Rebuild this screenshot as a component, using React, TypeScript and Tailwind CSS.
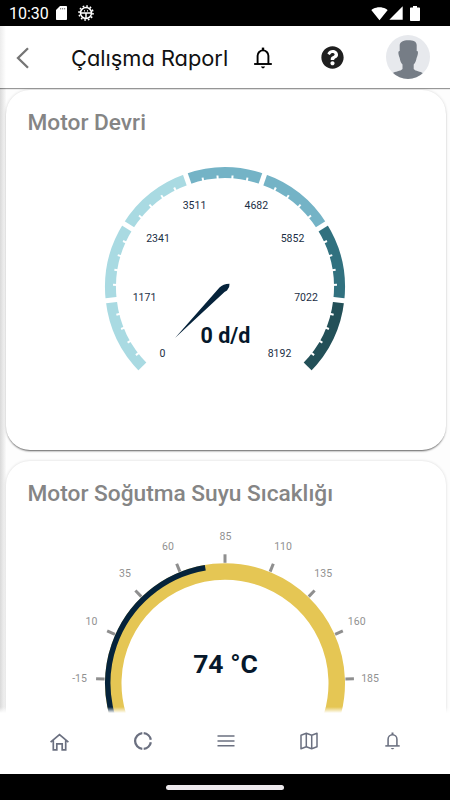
import type { ReactNode } from "react"
import { FaQuestionCircle } from "react-icons/fa"
import { MdSdCard, MdSignalCellular4Bar, MdSignalWifi4Bar } from "react-icons/md"

const polar = (cx: number, cy: number, r: number, deg: number) => {
    const a = (deg * Math.PI) / 180
    return [cx + r * Math.sin(a), cy - r * Math.cos(a)]
}

const arc = (cx: number, cy: number, r: number, from: number, to: number) => {
    const [x1, y1] = polar(cx, cy, r, from)
    const [x2, y2] = polar(cx, cy, r, to)
    return `M${x1} ${y1}A${r} ${r} 0 ${to - from > 180 ? 1 : 0} 1 ${x2} ${y2}`
}

const Bell = ({ className }: { className: string }) => (
    <svg viewBox="0 0 18 22" className={className} fill="none" stroke="currentColor" strokeWidth="1.900">
        <path d="M3.600 17V8.800a5.400 5.400 0 0 1 10.800 0V17" />
        <path d="M.2 17h17.600" />
        <path d="M9 .6v3" strokeWidth="2.400" />
        <path d="M6.800 19.600h4.400L9.800 21.200H8.200z" fill="currentColor" stroke="none" />
    </svg>
)

const StatusBar = () => (
    <div className="flex h-[26px] shrink-0 items-center bg-black pl-[9px] pr-[30px] text-white">
        <span className="w-[44px] pt-[1px] text-[16px] leading-none">10:30</span>
        <svg viewBox="0 0 11 14" className="ml-[3px] h-[14px] w-[11px]">
            <path fill="currentColor" d="M4 0h6.300q.7 0 .7.700v12.600q0 .7-.7.700H.7q-.7 0-.7-.7V4z" />
            <path stroke="#555" strokeWidth="1" strokeDasharray="1.200 .8" d="M4 2.800h5.500" />
        </svg>
        <svg viewBox="0 0 16 16" className="ml-[11px] h-4 w-4" fill="none" stroke="currentColor">
            <circle cx="8" cy="8" r="5.5" strokeWidth="1.5" />
            <circle cx="8" cy="8" r="7" strokeWidth="1.6" strokeDasharray="1.7 1.965" />
            <path d="M3 8h10M8 8v5.5" strokeWidth="1.5" />
            <path d="M6 5.8h1M9 5.8h1" strokeWidth="1.2" />
        </svg>
        <div className="ml-auto flex items-center">
            <MdSignalWifi4Bar className="h-[17px] w-[17px]" />
            <MdSignalCellular4Bar className="h-4 w-4" />
            <svg viewBox="0 0 10 15" className="ml-[6px] h-[15px] w-[10px]" fill="currentColor">
                <path d="M3 0h4v1.500h2.200a.8.8 0 0 1 .8.8v11.900a.8.8 0 0 1-.8.8H.8a.8.8 0 0 1-.8-.8V2.300a.8.8 0 0 1 .8-.8H3z" />
            </svg>
        </div>
    </div>
)

const Header = () => (
    <header className="relative z-10 flex h-[62px] shrink-0 items-center bg-white shadow-[0_1px_1px_rgba(0,0,0,0.4)]">
        <div className="absolute inset-y-0 left-0 w-[6px] bg-gradient-to-r from-[#ececec] to-white" />
        <svg viewBox="0 0 14 22" className="relative ml-4 mt-[2px] h-[22px] w-[14px]" fill="none" stroke="#757575" strokeWidth="2.3">
            <path d="M12 1.2 2 11l10 9.8" />
        </svg>
        <h1 className="ml-[41px] mt-[1px] w-[157px] whitespace-nowrap font-['Inter'] text-[21.8px] leading-8 text-[#111] [font-feature-settings:'cv11']">
            Çalışma Raporl
        </h1>
        <Bell className="ml-[25.5px] mt-[2px] h-[22px] w-[18px] text-black" />
        <FaQuestionCircle className="ml-[49px] h-[23px] w-[23px] text-[#1f1f1f]" />
        <svg viewBox="0 0 44 44" className="ml-auto mr-5 h-11 w-11">
            <clipPath id="avatar">
                <circle cx="22" cy="22" r="22" />
            </clipPath>
            <g clipPath="url(#avatar)">
                <path fill="#e7e9ed" d="M0 0h44v44H0z" />
                <path
                    fill="#767d86"
                    d="M13.700 10c.3-3 3.500-4.700 8.500-4.700s8.300 1 8.500 4.700v6c1.800-.4 1.600 3-.1 7-.5 3-1.400 5-2.900 6.500V34c2 2.500 6.300 2 9.800 4.500V46H6v-7.500c3.500-2.500 8.500-2 10.500-4.500v-4.500c-1.500-1.500-2.400-3.500-2.800-6.500-1.700-4-1.800-7.400 0-7z"
                />
            </g>
        </svg>
    </header>
)

const Card = ({ title, className, children }: { title: string; className: string; children: ReactNode }) => (
    <section className={`relative ml-[6px] h-[360px] w-[440px] shrink-0 rounded-[24px] bg-white ${className}`}>
        <h2 className="h-[68px] pl-[21.5px] pt-[17px] text-[22.7px] font-medium leading-8 text-[#858585]">{title}</h2>
        {children}
    </section>
)

const STEP = 270 / 7
const segments = ["#a9dae2", "#a9dae2", "#a9dae2", "#74b3c6", "#74b3c6", "#31717f", "#235058"]
const rpmLabels = [
    { value: "0", x: 162.5, y: 356.500 },
    { value: "1171", x: 144.5, y: 301 },
    { value: "2341", x: 158, y: 241.500 },
    { value: "3511", x: 194.5, y: 208.500 },
    { value: "4682", x: 256.3, y: 208.500 },
    { value: "5852", x: 292.5, y: 241.500 },
    { value: "7022", x: 306, y: 301 },
    { value: "8192", x: 279.5, y: 356.500 },
]

const RpmGauge = () => (
    <svg viewBox="6 158 440 240" className="h-[240px] w-[440px]">
        {segments.map((color, i) => (
            <path key={i} d={arc(225, 287.3, 114.5, -135 + i * STEP, -135 + (i + 1) * STEP)} fill="none" stroke={color} strokeWidth="11" />
        ))}
        {Array.from({ length: 36 }, (_, i) => {
            const major = i % 5 === 0
            const [x1, y1] = polar(225, 287.3, 107, -135 + (i * STEP) / 5)
            const [x2, y2] = polar(225, 287.3, major ? 122 : 112, -135 + (i * STEP) / 5)
            return <line key={i} x1={x1} y1={y1} x2={x2} y2={y2} stroke="#fff" strokeWidth={major ? 5 : 2} />
        })}
        {rpmLabels.map((l) => (
            <text key={l.value} x={l.x} y={l.y} textAnchor="middle" fontSize="10.500" fill="#1a2e44">{l.value}</text>
        ))}
        <path d="M175 338 219.500 287.500Q223 284 229.500 283.700 230 287 227 290.500L224.500 292Z" fill="#06233b" />
        <text x="225.500" y="342.700" textAnchor="middle" fontSize="21.500" fontWeight="700" fill="#06182b">0 d/d</text>
    </svg>
)

const tempLabels = [
    { value: -15, x: 79.5, y: 681.500 },
    { value: 10, x: 91.5, y: 625 },
    { value: 35, x: 125, y: 577 },
    { value: 60, x: 168, y: 550 },
    { value: 85, x: 225.500, y: 539.500 },
    { value: 110, x: 283, y: 550 },
    { value: 135, x: 323.2, y: 577 },
    { value: 160, x: 356.7, y: 625 },
    { value: 185, x: 370, y: 681.500 },
]

const TempGauge = () => (
    <svg viewBox="6 529 440 260" className="h-[260px] w-[440px]">
        <path d={arc(225, 683.3, 111.75, -132, 132)} fill="none" stroke="#e5c654" strokeWidth="16.500" />
        <path d={arc(225, 683.3, 117.25, -132, (74 - 85) * 0.88)} fill="none" stroke="#05233b" strokeWidth="5.500" />
        {tempLabels.map((l) => {
            const deg = (l.value - 85) * 0.88
            const [x1, y1] = polar(225, 683.3, 120.500, deg)
            const [x2, y2] = polar(225, 683.3, 129, deg)
            return (
                <g key={l.value}>
                    <line x1={x1} y1={y1} x2={x2} y2={y2} stroke="#8f8f8f" strokeWidth="3" />
                    <text x={l.x} y={l.y} textAnchor="middle" fontSize="10.500" fill="#919191">{l.value}</text>
                </g>
            )
        })}
        <text x="225.500" y="673" textAnchor="middle" fontSize="26.500" fontWeight="700" fill="#06182b">74 °C</text>
    </svg>
)

const NavBar = () => (
    <nav className="relative flex h-[61px] shrink-0 items-center bg-white pb-[4px] pl-[18px] pr-[16px] text-[#6b7080]">
        <div className="absolute inset-x-0 -top-[6px] h-[6px] bg-gradient-to-b from-white/0 to-white" />
        <div className="flex flex-1 justify-center">
            <svg viewBox="0 0 19 18" className="h-[18px] w-[19px]" fill="none" stroke="currentColor" strokeWidth="1.700">
                <path d="M.6 9.200 9.500 1.500l8.900 7.700M3.300 7.500v9.400h3.500v-6.100h5.400v6.100h3.500V7.500" />
            </svg>
        </div>
        <div className="flex flex-1 justify-center">
            <svg viewBox="0 0 20 20" className="-mt-[1px] h-5 w-5" fill="none" stroke="currentColor" strokeWidth="2.300">
                <path d={arc(10, 10, 7.9, 185, 355)} />
                <path d={arc(10, 10, 7.9, 5, 81)} />
                <path d={arc(10, 10, 7.9, 99, 175)} />
            </svg>
        </div>
        <div className="flex flex-1 justify-center">
            <svg viewBox="0 0 18 18" className="-mt-[1px] h-[18px] w-[18px]" stroke="currentColor" strokeWidth="1.500">
                <path d="M.5 4h17M.5 9h17M.5 13.700h17" />
            </svg>
        </div>
        <div className="flex flex-1 justify-center">
            <svg viewBox="0 0 18 18" className="-mt-[1px] h-[18px] w-[18px]" fill="none" stroke="currentColor" strokeWidth="1.500" strokeLinejoin="round">
                <path d="M1 3.200 6.300 1.300l5.400 1.900L17 1.300v13.500l-5.300 1.900-5.400-1.900L1 16.700zM6.300 1.300v13.500M11.700 3.200v13.500" />
            </svg>
        </div>
        <div className="flex flex-1 justify-center">
            <Bell className="-mt-[1px] h-[18px] w-[15px]" />
        </div>
    </nav>
)

export default function App() {
    return (
        <div className="flex h-[800px] w-[450px] flex-col overflow-hidden bg-white font-['Roboto',sans-serif]">
            <StatusBar />
            <Header />
            <main className="relative flex min-h-0 flex-1 flex-col gap-[11px] overflow-hidden bg-[#fdfdfd] pt-[2px]">
                <div className="absolute inset-y-0 left-0 w-[6px] bg-gradient-to-r from-[#d9d9d9] to-[#fafafa]" />
                <Card title="Motor Devri" className="shadow-[0_2px_2px_-1px_rgba(0,0,0,0.6),0_0_3px_rgba(0,0,0,0.15)]">
                    <RpmGauge />
                </Card>
                <Card title="Motor Soğutma Suyu Sıcaklığı" className="shadow-[0_0_3px_rgba(0,0,0,0.15)]">
                    <TempGauge />
                </Card>
            </main>
            <NavBar />
            <div className="flex h-[26px] shrink-0 items-center justify-center bg-black">
                <div className="h-[5px] w-[118px] rounded-full bg-[#ece8ec]" />
            </div>
        </div>
    )
}
